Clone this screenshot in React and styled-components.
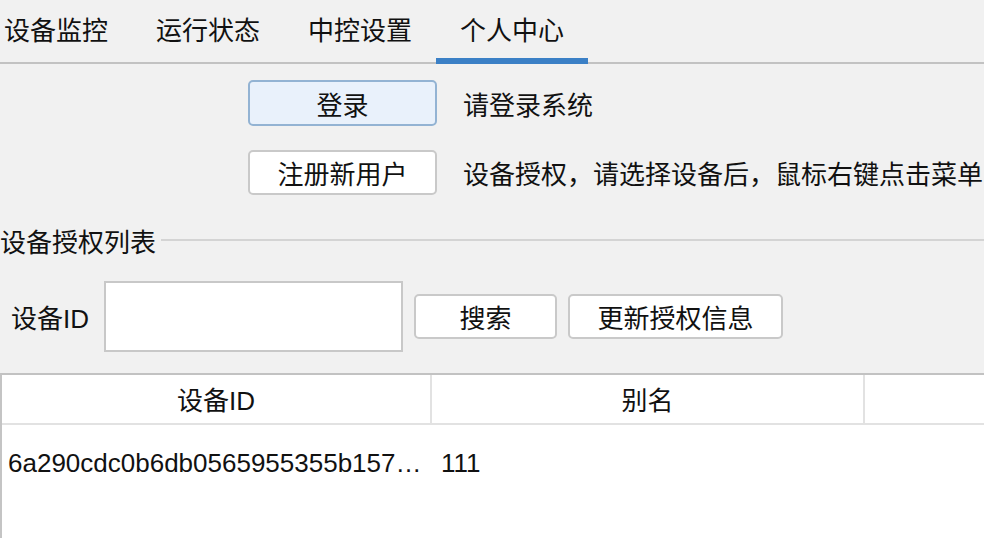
import React from "react";
import styled, { createGlobalStyle } from "styled-components";

const GlobalStyle = createGlobalStyle`
  html, body {
    margin: 0;
    padding: 0;
    background: #f1f1f1;
    overflow: hidden;
  }
  body {
    font-family: "Liberation Sans", "Noto Sans CJK SC", sans-serif;
    font-size: 26px;
    color: #111;
  }
`;

const Page = styled.div`
  width: 984px;
  height: 538px;
  overflow: hidden;
  display: flex;
  flex-direction: column;
`;

const TabBar = styled.div`
  height: 64px;
  display: flex;
  border-bottom: 2px solid #c2c2c2;
  box-sizing: border-box;
  margin-left: -20px;
`;

const Tab = styled.div`
  width: 152px;
  display: flex;
  align-items: center;
  justify-content: center;
  padding-bottom: 6px;
  box-sizing: border-box;
  position: relative;
  &::after {
    content: "";
    position: absolute;
    left: 0;
    right: 0;
    bottom: -2px;
    height: 6px;
    background: ${(p) => (p.active ? "#3b80c6" : "transparent")};
  }
`;

const Actions = styled.div`
  display: flex;
  flex-direction: column;
  gap: 24px;
  padding: 16px 0 0 248px;
`;

const ActionRow = styled.div`
  display: flex;
  align-items: center;
  gap: 26px;
  white-space: nowrap;
`;

const Button = styled.div`
  width: ${(p) => p.w}px;
  height: 45px;
  box-sizing: border-box;
  display: flex;
  align-items: center;
  justify-content: center;
  border-radius: 5px;
  border: 2px solid ${(p) => (p.primary ? "#93b3d3" : "#c9c9c9")};
  background: ${(p) => (p.primary ? "#e9f1fb" : "#fff")};
  flex-shrink: 0;
`;

const GroupTitle = styled.div`
  display: flex;
  align-items: center;
  gap: 5px;
  margin-top: 29px;
  height: 32px;
  &::after {
    content: "";
    flex: 1;
    height: 2px;
    background: #d4d4d4;
  }
`;

const SearchRow = styled.div`
  display: flex;
  align-items: center;
  margin-top: 25px;
  padding-left: 11px;
`;

const Label = styled.span`
  width: 93px;
`;

const Input = styled.div`
  width: 299px;
  height: 71px;
  box-sizing: border-box;
  border: 2px solid #c8c8c8;
  background: #fff;
  margin-right: 11px;
`;

const SearchButton = styled(Button)`
  margin-right: 11px;
`;

const Table = styled.div`
  margin-top: 21px;
  flex: 1;
  background: #fff;
  border-top: 2px solid #c2c2c2;
  border-left: 2px solid #c4c4c4;
  display: grid;
  grid-template-columns: 430px 433px 1fr;
  grid-auto-rows: min-content;
`;

const HeadCell = styled.div`
  height: 50px;
  box-sizing: border-box;
  display: flex;
  align-items: center;
  justify-content: center;
  padding-bottom: 2px;
  border-bottom: 2px solid #e2e2e2;
  border-right: ${(p) => (p.last ? "none" : "2px solid #e2e2e2")};
`;

const Cell = styled.div`
  height: 76px;
  display: flex;
  align-items: center;
  padding-left: ${(p) => p.pad}px;
  white-space: nowrap;
  overflow: hidden;
`;

export default function App() {
  const tabs = ["设备监控", "运行状态", "中控设置", "个人中心"];
  return (
    <Page>
      <GlobalStyle />
      <TabBar>
        {tabs.map((t, i) => (
          <Tab key={t} active={i === 3}>
            {t}
          </Tab>
        ))}
      </TabBar>
      <Actions>
        <ActionRow>
          <Button w={189} primary style={{ height: 46 }}>登录</Button>
          <span>请登录系统</span>
        </ActionRow>
        <ActionRow>
          <Button w={189}>注册新用户</Button>
          <span>设备授权，请选择设备后，鼠标右键点击菜单</span>
        </ActionRow>
      </Actions>
      <GroupTitle>设备授权列表</GroupTitle>
      <SearchRow>
        <Label>设备ID</Label>
        <Input />
        <SearchButton w={143}>搜索</SearchButton>
        <Button w={215}>更新授权信息</Button>
      </SearchRow>
      <Table>
        <HeadCell>设备ID</HeadCell>
        <HeadCell>别名</HeadCell>
        <HeadCell last />
        <Cell pad={6}>6a290cdc0b6db0565955355b157…</Cell>
        <Cell pad={9}>111</Cell>
        <Cell />
      </Table>
    </Page>
  );
}
